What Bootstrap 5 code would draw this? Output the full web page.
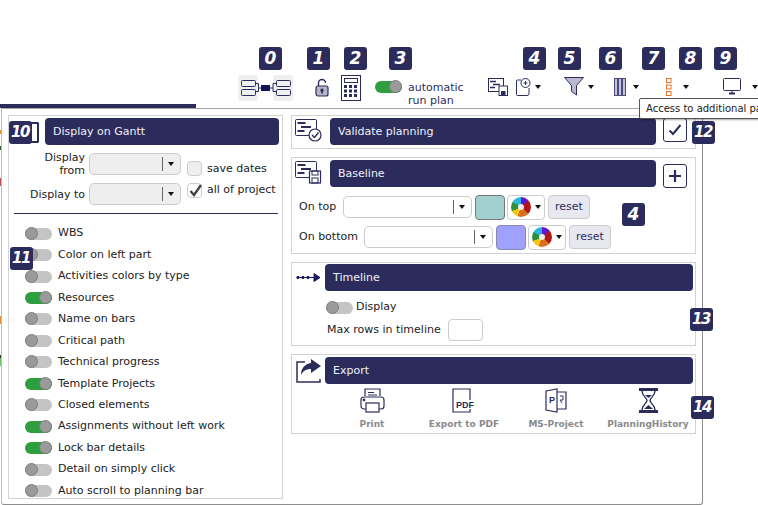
<!DOCTYPE html>
<html lang="en">
<head>
    <meta charset="UTF-8">
    <meta name="viewport" content="width=device-width, initial-scale=1.0">
    <title>Planning options</title>
    <link href="https://cdn.jsdelivr.net/npm/bootstrap@5.3.0/dist/css/bootstrap.min.css" rel="stylesheet">
    <style>
        html, body { height: 505px; overflow: hidden; }
        body {
            font-family: "DejaVu Sans", Verdana, sans-serif;
            font-size: 11px;
            color: #222;
            background: #fff;
            position: relative;
        }
        svg { display: block; flex: none; }

        /* toolbar */
        .toolbar { height: 104px; padding-top: 75px; padding-left: 238px; }
        .tb-lock { margin: 3px 0 0 22px; }
        .tb-calc { margin-left: 12px; }
        .tb-switch { margin: 6px 7px 0 14px; }
        .tb-runplan { margin-top: 6px; color: #2e2e5e; line-height: 13px; }
        .tb-i4 { margin: 3px 0 0 18px; }
        .tb-i5 { margin: 3px 0 0 8px; }
        .tb-i6 { margin: 2px 0 0 23px; }
        .tb-i7 { margin: 3px 0 0 20px; }
        .tb-i8 { margin: 3px 0 0 27px; }
        .tb-i9 { margin: 3px 0 0 34px; }
        .tb-caret { margin-top: 10px; margin-left: 4px; }
        .tb-c7 { margin-left: 7px; }
        .tb-c8 { margin-left: 11px; }
        .tb-c9 { margin-left: 11px; }
        .caret-down {
            width: 0; height: 0; flex: none;
            border-left: 3.5px solid transparent;
            border-right: 3.5px solid transparent;
            border-top: 4px solid #111;
        }
        .gantt-strip { height: 4px; width: 196px; background: #2c2c5c; }
        .tip-box {
            position: absolute; left: 639px; top: 98px; width: 130px; height: 21px;
            background: #fff; border: 1px solid #555; border-radius: 2px;
            box-shadow: 1px 1px 2px rgba(0,0,0,.35);
            font-size: 10px; line-height: 19px; padding-left: 6px;
            white-space: nowrap; overflow: hidden; z-index: 5;
        }

        /* panel */
        .panel-wrap {
            height: 397px;
            background: linear-gradient(to bottom, #fff 22px, #e08a30 22px, #e08a30 26px, #fff 26px, #fff 38px, #2f5d2f 38px, #2f5d2f 42px, #fff 42px, #fff 70px, #c0504d 70px, #c0504d 78px, #fff 78px, #fff 208px, #e08a30 208px, #e08a30 216px, #fff 216px, #fff 247px, #333 247px, #333 250px, #fff 250px, #fff 250px, #6cc46c 250px, #6cc46c 258px, #fff 258px) no-repeat 0 0 / 1px 100%;
            padding-left: 1px;
        }
        .main-panel {
            width: 702px; height: 397px;
            background: #fff;
            border: 1px solid #a5a5a5;
            border-left-color: #bdbdbd;
            border-right-color: #8d8d8d;
            border-bottom-color: #8d8d8d;
            border-radius: 0 0 3px 3px;
            padding: 6px 6px 0 6px;
            gap: 8px;
        }
        .box-line { border: 1px solid #d2d2d2; background: #fff; }
        .left-col { width: 275px; height: 384px; padding: 2px 3px 0 4px; }
        .right-col { width: 405px; gap: 8px; }
        .title-bar {
            background: #2c2c5c; color: #f0f0f8; border-radius: 4px;
            height: 27px; line-height: 27px; padding-left: 8px; font-size: 11px;
        }

        /* date filter */
        .date-row { height: 30px; }
        .date-lbl { width: 68px; text-align: right; margin-left: 4px; margin-right: 4px; line-height: 13px; }
        .combo {
            height: 22px; background: #fff; border: 1px solid #ccc; border-radius: 5px;
            padding-right: 6px;
        }
        .combo-off { background: #eee; width: 92px; }
        .combo-fill { flex: 1 1 auto; }
        .combo-sep { width: 1px; height: 14px; background: #666; margin-right: 5px; }
        .base-combo { width: 129px; }
        .chk {
            width: 15px; height: 15px; border: 1px solid #ccc; border-radius: 4px;
            background: #eee; flex: none; margin-right: 5px; position: relative;
        }
        .chk-on { background: #fff; }
        .chk-on svg { position: absolute; left: 0; top: -1px; }
        .chk-col { margin-left: 6px; gap: 5px; margin-top: 1px; }
        .filter-rule { height: 1px; background: #2c2c5c; margin: 4px 1px 9px 1px; }

        /* switches */
        .opt-row { height: 21.45px; padding-left: 12px; }
        .sw {
            width: 27px; height: 12px; border-radius: 6px; background: #c4c4c4;
            position: relative; flex: none; margin-right: 6px;
        }
        .sw::after {
            content: ""; position: absolute; top: -1px; left: 0; width: 13px; height: 13px;
            border-radius: 50%; background: #9a9a9a; border: 1px solid #7e7e7e;
        }
        .sw-on { background: #2f9e3f; }
        .sw-on::after { left: 14px; }

        /* right side */
        .validate-box { height: 34px; padding-left: 3px; padding-top: 2px; }
        .baseline-box { height: 97px; padding-left: 3px; padding-top: 2px; }
        .timeline-box { height: 84px; padding-top: 1px; }
        .export-box { height: 80px; padding-top: 2px; }
        .icon-slot { width: 35px; }
        .icon-slot-tl { width: 33px; height: 27px; }
        .bar-w { width: 326px; }
        .bar-full { width: 368px; }
        .square-btn {
            width: 24px; height: 24px; margin-left: 7px; background: #fff;
            border: 1px solid #2c2c5c; border-radius: 3px;
        }
        .plain-row { height: 30px; padding-left: 4px; }
        .row-top { margin-top: 4px; }
        .lbl-top { width: 44px; }
        .lbl-bottom { width: 65px; }
        .swatch { width: 30px; height: 25px; border: 1px solid #777; border-radius: 4px; margin: 0 2px 0 3px; }
        .sw-teal { background: #a2cfcf; }
        .sw-blue { background: #a0a0ff; border-color: #8a8ab0; }
        .picker {
            width: 38px; height: 25px; background: #fff; border: 1px solid #ccc; border-radius: 4px;
            padding-left: 3px; gap: 4px;
        }
        .wheel {
            width: 20px; height: 20px; border-radius: 50%; position: relative; flex: none;
            background: conic-gradient(#5b16d8 0 45deg, #b01616 45deg 135deg, #d9701a 135deg 200deg, #f5c518 200deg 245deg, #2f8f3a 245deg 300deg, #29b6d8 300deg 360deg);
        }
        .wheel::after {
            content: ""; position: absolute; left: 7px; top: 7px; width: 6px; height: 6px;
            border-radius: 50%; background: #eee;
        }
        .reset-btn {
            width: 42px; height: 24px; margin-left: 3px; background: #e8e8f0; color: #2e2e5e;
            border: 1px solid #ccc; border-radius: 4px; font-size: 11px; line-height: 22px; text-align: center;
        }
        .tl-display { padding-left: 34px; height: 15px; margin-top: 9px; }
        .tl-display .sw { margin-right: 3px; }
        .tl-max { padding-left: 35px; margin-top: 4px; }
        .tl-input { width: 35px; height: 22px; border: 1px solid #ccc; border-radius: 4px; margin-left: 7px; }
        .export-row { margin-top: 4px; padding-left: 34px; }
        .export-item { width: 92px; color: #8a8a8a; font-size: 9px; font-weight: 600; line-height: 11px; gap: 6px; }
        .export-item svg { height: 25px; }

        /* numbered callouts */
        .num-tag {
            position: absolute; width: 23px; height: 23px; z-index: 6;
            background: #2c2c5c; color: #fff; border-radius: 3px;
            font: italic bold 17px/23px "DejaVu Sans", sans-serif; text-align: center;
        }
        .num-wide { font-size: 15px; letter-spacing: -1.5px; text-indent: -1px; }
        .n0 { left: 259px; top: 47px; } .n1 { left: 307px; top: 47px; } .n2 { left: 344px; top: 47px; }
        .n3 { left: 389px; top: 47px; } .n4 { left: 523px; top: 47px; } .n5 { left: 558px; top: 47px; }
        .n6 { left: 599px; top: 47px; } .n7 { left: 642px; top: 47px; } .n8 { left: 679px; top: 47px; }
        .n9 { left: 714px; top: 47px; } .n10 { left: 9px; top: 121px; } .n11 { left: 10px; top: 247px; }
        .n12 { left: 692px; top: 121px; } .n4b { left: 622px; top: 203px; }
        .n13 { left: 690px; top: 308px; } .n14 { left: 691px; top: 396px; }
        .n10-mark { position: absolute; left: 28px; top: 122px; width: 11px; height: 21px; border: 2px solid #2c2c5c; border-left: 0; border-radius: 0 2px 2px 0; }
    </style>
</head>
<body>

    <!-- Toolbar -->
    <div class="toolbar d-flex align-items-start">
        <svg width="55" height="26" viewBox="0 0 55 26" fill="none" stroke="#2c2c5c">
            <rect x="0" y="0" width="20" height="26" rx="2" fill="#f0f0f0" stroke="none"/>
            <rect x="35" y="0" width="20" height="26" rx="2" fill="#f0f0f0" stroke="none"/>
            <rect x="3.5" y="5.5" width="14" height="6" rx="1"/>
            <rect x="3.5" y="14.5" width="14" height="6" rx="1"/>
            <rect x="38.5" y="5.5" width="14" height="6" rx="1"/>
            <rect x="38.5" y="14.5" width="14" height="6" rx="1"/>
            <path d="M17.5 8.5h3v8h-3M38 8.5h-3v8h3M20 13h15"/>
            <rect x="23" y="10" width="9" height="6" fill="#12125a" stroke="none"/>
        </svg>
        <svg class="tb-lock" width="14" height="19" viewBox="0 0 14 19" fill="none" stroke="#2c2c5c">
            <path d="M3.5 8V5a3.5 3.5 0 0 1 7 0" stroke-width="1.4"/>
            <rect x="1" y="8" width="12" height="10" rx="2" fill="#b4b4c4" stroke-width="1.2"/>
            <circle cx="7" cy="12.2" r="1.6" fill="#2c2c5c" stroke="none"/>
            <rect x="6.2" y="12.5" width="1.6" height="3" fill="#2c2c5c" stroke="none"/>
        </svg>
        <svg class="tb-calc" width="20" height="26" viewBox="0 0 20 26" fill="none" stroke="#2c2c5c">
            <rect x=".5" y=".5" width="19" height="25"/>
            <rect x="3.5" y="3.5" width="13" height="4"/>
            <g fill="#2c2c5c" stroke="none">
                <rect x="3" y="10" width="3" height="3"/><rect x="8" y="10" width="3" height="3"/><rect x="13" y="10" width="3" height="3"/>
                <rect x="3" y="14.5" width="3" height="3"/><rect x="8" y="14.5" width="3" height="3"/><rect x="13" y="14.5" width="3" height="3"/>
                <rect x="3" y="19" width="3" height="3"/><rect x="8" y="19" width="3" height="3"/><rect x="13" y="19" width="3" height="3"/>
            </g>
        </svg>
        <span class="sw sw-on tb-switch"></span>
        <span class="tb-runplan">automatic run plan</span>
        <svg class="tb-i4" width="20" height="18" viewBox="0 0 20 18" fill="none" stroke="#2c2c5c">
            <rect x=".5" y=".5" width="15" height="13"/>
            <path d="M2 3.5h6M5 6.5h7M2 9.5h5" stroke-width="1.6"/>
            <rect x="11" y="8" width="8.5" height="9.5" fill="#fff"/>
            <rect x="13" y="13" width="4.5" height="4" fill="#2c2c5c" stroke="none"/>
        </svg>
        <svg class="tb-i5" width="15" height="18" viewBox="0 0 15 18" fill="none" stroke="#2c2c5c">
            <path d="M5 2H1.5a1 1 0 0 0-1 1v13.5a1 1 0 0 0 1 1H11a2 2 0 0 0 2-2V10"/>
            <circle cx="9.5" cy="5" r="4.5" fill="#fff"/>
            <path d="M9.5 3v4M7.500 5h4"/>
        </svg>
        <span class="caret-down tb-caret"></span>
        <svg class="tb-i6" width="20" height="19" viewBox="0 0 20 19" fill="#b9b9cf" stroke="#2c2c5c">
            <path d="M.5.500h19l-7 8v9.500l-5-3.500v-6z"/>
        </svg>
        <span class="caret-down tb-caret"></span>
        <svg class="tb-i7" width="12" height="18" viewBox="0 0 12 18" fill="#c4c4da" stroke="#4a4a7c">
            <rect x=".5" y=".5" width="3" height="17"/>
            <rect x="4.500" y=".5" width="3" height="17"/>
            <rect x="8.500" y=".5" width="3" height="17"/>
        </svg>
        <span class="caret-down tb-caret tb-c7"></span>
        <svg class="tb-i8" width="6" height="18" viewBox="0 0 6 18" fill="#fff" stroke="#e8722a">
            <rect x=".5" y=".5" width="4.500" height="4"/>
            <rect x=".5" y="7" width="4.500" height="4"/>
            <rect x=".5" y="13.500" width="4.500" height="4"/>
        </svg>
        <span class="caret-down tb-caret tb-c8"></span>
        <svg class="tb-i9" width="18" height="17" viewBox="0 0 18 17" fill="none" stroke="#2c2c5c">
            <rect x=".5" y=".5" width="17" height="12" rx="1"/>
            <path d="M6 15.500h6" stroke-width="2"/>
            <path d="M9 13v2"/>
        </svg>
        <span class="caret-down tb-caret tb-c9"></span>
    </div>
    <div class="gantt-strip"></div>

    <!-- Options panel -->
    <div class="panel-wrap">
        <div class="main-panel d-flex">

            <div class="box-line left-col">
                <div class="title-bar ms-auto" style="width:234px">Display on Gantt</div>
                <div class="d-flex mt-1">
                    <div>
                        <div class="date-row d-flex align-items-center">
                            <span class="date-lbl">Display from</span>
                            <div class="combo combo-off d-flex align-items-center"><span class="combo-fill"></span><span class="combo-sep"></span><span class="caret-down"></span></div>
                        </div>
                        <div class="date-row d-flex align-items-center">
                            <span class="date-lbl">Display to</span>
                            <div class="combo combo-off d-flex align-items-center"><span class="combo-fill"></span><span class="combo-sep"></span><span class="caret-down"></span></div>
                        </div>
                    </div>
                    <div class="chk-col d-flex flex-column justify-content-center">
                        <div class="d-flex align-items-center"><span class="chk"></span>save dates</div>
                        <div class="d-flex align-items-center">
                            <span class="chk chk-on">
                                <svg width="15" height="15" viewBox="0 0 15 15" fill="none" stroke="#444" stroke-width="2.400"><path d="M2.500 8l3.500 4 7-10"/></svg>
                            </span>all of project
                        </div>
                    </div>
                </div>
                <div class="filter-rule"></div>
                <div class="opt-row d-flex align-items-center"><span class="sw"></span>WBS</div>
                <div class="opt-row d-flex align-items-center"><span class="sw"></span>Color on left part</div>
                <div class="opt-row d-flex align-items-center"><span class="sw"></span>Activities colors by type</div>
                <div class="opt-row d-flex align-items-center"><span class="sw sw-on"></span>Resources</div>
                <div class="opt-row d-flex align-items-center"><span class="sw"></span>Name on bars</div>
                <div class="opt-row d-flex align-items-center"><span class="sw"></span>Critical path</div>
                <div class="opt-row d-flex align-items-center"><span class="sw"></span>Technical progress</div>
                <div class="opt-row d-flex align-items-center"><span class="sw sw-on"></span>Template Projects</div>
                <div class="opt-row d-flex align-items-center"><span class="sw"></span>Closed elements</div>
                <div class="opt-row d-flex align-items-center"><span class="sw sw-on"></span>Assignments without left work</div>
                <div class="opt-row d-flex align-items-center"><span class="sw sw-on"></span>Lock bar details</div>
                <div class="opt-row d-flex align-items-center"><span class="sw"></span>Detail on simply click</div>
                <div class="opt-row d-flex align-items-center"><span class="sw"></span>Auto scroll to planning bar</div>
            </div>

            <div class="right-col d-flex flex-column">
                <div class="box-line validate-box d-flex align-items-start">
                    <div class="icon-slot d-flex align-items-center">
                        <svg width="27" height="24" viewBox="0 0 27 24" fill="none" stroke="#2c2c5c">
                            <rect x=".5" y="1.500" width="21" height="16" rx="1"/>
                            <path d="M2.500 5h8M6 9h10M2.500 13h7" stroke-width="1.800"/>
                            <circle cx="20" cy="17" r="6" fill="#fff" stroke-width="1.200"/>
                            <path d="M17 17l2.500 2.500 4-5" stroke-width="1.400"/>
                        </svg>
                    </div>
                    <div class="title-bar bar-w">Validate planning</div>
                    <div class="square-btn d-flex align-items-center justify-content-center">
                        <svg width="14" height="12" viewBox="0 0 14 12" fill="none" stroke="#2c2c5c" stroke-width="2"><path d="M1.500 6.500l3.500 3.500 7.500-9"/></svg>
                    </div>
                </div>

                <div class="box-line baseline-box">
                    <div class="d-flex align-items-start">
                        <div class="icon-slot d-flex align-items-center">
                            <svg width="27" height="24" viewBox="0 0 27 24" fill="none" stroke="#2c2c5c">
                                <rect x=".5" y="1.500" width="21" height="16" rx="1"/>
                                <path d="M2.500 5h8M6 9h10M2.500 13h7" stroke-width="1.800"/>
                                <rect x="14.500" y="11" width="11" height="12" fill="#fff" stroke-width="1.200"/>
                                <rect x="17" y="11" width="6" height="4"/>
                                <rect x="17" y="18" width="6" height="5"/>
                            </svg>
                        </div>
                        <div class="title-bar bar-w">Baseline</div>
                        <div class="square-btn d-flex align-items-center justify-content-center mt-1">
                            <svg width="14" height="14" viewBox="0 0 14 14" fill="none" stroke="#2c2c5c" stroke-width="2.200"><path d="M7 1v12M1 7h12"/></svg>
                        </div>
                    </div>
                    <div class="plain-row row-top d-flex align-items-center">
                        <span class="lbl-top">On top</span>
                        <div class="combo base-combo d-flex align-items-center"><span class="combo-fill"></span><span class="combo-sep"></span><span class="caret-down"></span></div>
                        <span class="swatch sw-teal"></span>
                        <div class="picker d-flex align-items-center"><span class="wheel"></span><span class="caret-down"></span></div>
                        <span class="reset-btn">reset</span>
                    </div>
                    <div class="plain-row d-flex align-items-center">
                        <span class="lbl-bottom">On bottom</span>
                        <div class="combo base-combo d-flex align-items-center"><span class="combo-fill"></span><span class="combo-sep"></span><span class="caret-down"></span></div>
                        <span class="swatch sw-blue"></span>
                        <div class="picker d-flex align-items-center"><span class="wheel"></span><span class="caret-down"></span></div>
                        <span class="reset-btn">reset</span>
                    </div>
                </div>

                <div class="box-line timeline-box">
                    <div class="d-flex">
                        <div class="icon-slot-tl d-flex align-items-center justify-content-center">
                            <svg width="25" height="9" viewBox="0 0 25 9" fill="#1c1c5c" stroke="#1c1c5c">
                                <path d="M1 4.500h18"/>
                                <circle cx="2" cy="4.500" r="1.200"/><circle cx="7" cy="4.500" r="1.200"/><circle cx="12" cy="4.500" r="1.200"/>
                                <path d="M18 .5l6 4-6 4z"/>
                            </svg>
                        </div>
                        <div class="title-bar bar-full">Timeline</div>
                    </div>
                    <div class="tl-display d-flex align-items-center"><span class="sw"></span>Display</div>
                    <div class="tl-max d-flex align-items-center">Max rows in timeline<span class="tl-input"></span></div>
                </div>

                <div class="box-line export-box">
                    <div class="d-flex">
                        <div class="icon-slot-tl d-flex align-items-center justify-content-center">
                            <svg width="26" height="25" viewBox="0 0 26 25" fill="none" stroke="#2c2c5c" stroke-width="1.500">
                                <path d="M9 4H1v20h23v-3"/>
                                <path d="M15 1l10 7-10 7v-4c-5 0-8 2-10 6 0-7 4-11 10-12z" fill="#2c2c5c" stroke="none"/>
                            </svg>
                        </div>
                        <div class="title-bar bar-full">Export</div>
                    </div>
                    <div class="export-row d-flex">
                        <div class="export-item d-flex flex-column align-items-center">
                            <svg width="25" height="25" viewBox="0 0 25 25" fill="none" stroke="#2c2c5c" stroke-width="1.200">
                                <path d="M5 8V1h15v7M8 4.500h6M8 7h9"/>
                                <rect x="1" y="9" width="23" height="12" rx="3"/>
                                <rect x="6" y="15" width="13" height="9" fill="#fff"/>
                                <circle cx="4" cy="12" r=".8" fill="#2c2c5c"/>
                            </svg>
                            Print
                        </div>
                        <div class="export-item d-flex flex-column align-items-center">
                            <svg width="25" height="25" viewBox="0 0 25 25" fill="none" stroke="#2c2c5c" stroke-width="1.200">
                                <path d="M18 12V1H1v23h17v-3"/>
                                <rect x="4" y="12" width="21" height="9" fill="#fff" stroke="none"/>
                                <text x="4" y="20" font-family="Liberation Sans, sans-serif" font-size="9" font-weight="700" fill="#2c2c5c" stroke="none">PDF</text>
                            </svg>
                            Export to PDF
                        </div>
                        <div class="export-item d-flex flex-column align-items-center">
                            <svg width="22" height="25" viewBox="0 0 22 25" fill="none" stroke="#2c2c5c" stroke-width="1.200">
                                <path d="M1 3l11-2v23L1 22zM12 4h9v17h-9"/>
                                <text x="4" y="15" font-family="Liberation Sans, sans-serif" font-size="9" font-weight="700" fill="#2c2c5c" stroke="none">P</text>
                                <path d="M15 8h3v4h-3l2 3" stroke-width="1"/>
                            </svg>
                            MS-Project
                        </div>
                        <div class="export-item d-flex flex-column align-items-center">
                            <svg width="19" height="25" viewBox="0 0 19 25" fill="none" stroke="#2c2c5c" stroke-width="1.400">
                                <rect x="0" y="0" width="19" height="3" fill="#2c2c5c" stroke="none"/>
                                <rect x="0" y="22" width="19" height="3" fill="#2c2c5c" stroke="none"/>
                                <path d="M3 3c0 5 5 7 5 9.500S3 17 3 22M16 3c0 5-5 7-5 9.500S16 17 16 22"/>
                                <path d="M5 21l4.500-4 4.500 4z" fill="#2c2c5c" stroke="none"/>
                                <path d="M6 7h7l-3.500 3z" fill="#2c2c5c" stroke="none"/>
                            </svg>
                            PlanningHistory
                        </div>
                    </div>
                </div>
            </div>
        </div>
    </div>

    <!-- Numbered callouts -->
    <span class="num-tag n0">0</span><span class="num-tag n1">1</span><span class="num-tag n2">2</span>
    <span class="num-tag n3">3</span><span class="num-tag n4">4</span><span class="num-tag n5">5</span>
    <span class="num-tag n6">6</span><span class="num-tag n7">7</span><span class="num-tag n8">8</span>
    <span class="num-tag n9">9</span><span class="n10-mark"></span><span class="num-tag num-wide n10">10</span>
    <span class="num-tag num-wide n11">11</span><span class="num-tag num-wide n12">12</span>
    <span class="num-tag n4b">4</span><span class="num-tag num-wide n13">13</span><span class="num-tag num-wide n14">14</span>

    <div class="tip-box">Access to additional parameters</div>

    <script src="https://cdn.jsdelivr.net/npm/bootstrap@5.3.0/dist/js/bootstrap.bundle.min.js"></script>
</body>
</html>
